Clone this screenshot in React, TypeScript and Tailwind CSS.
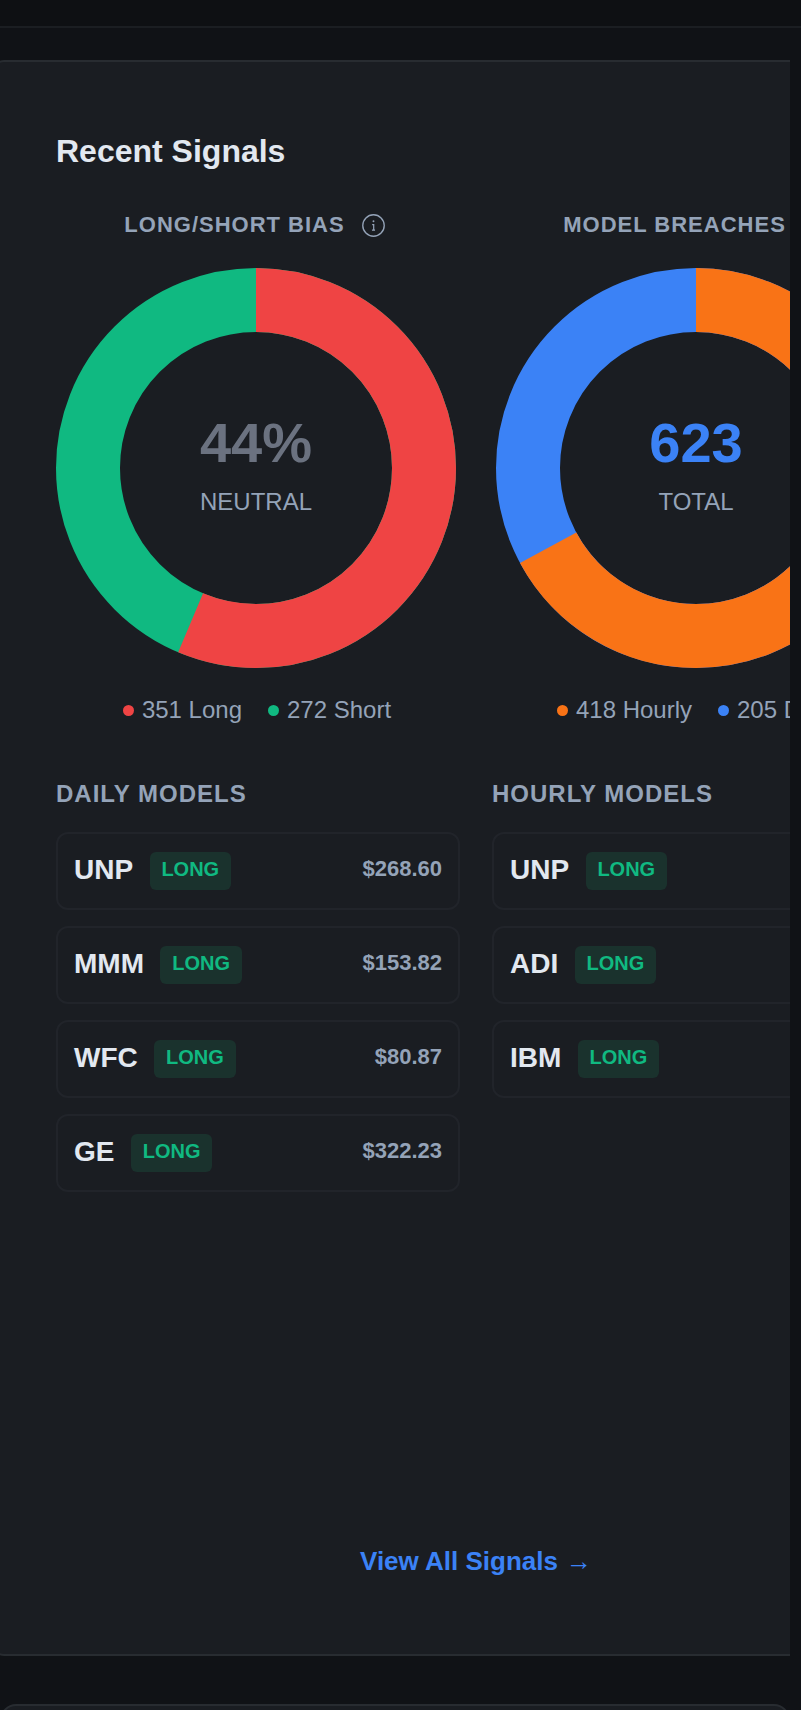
const Donut = ({ a, b, pct }: { a: string; b: string; pct: number }) => {
  const r = 168;
  const c = 2 * Math.PI * r;
  return (
    <svg width="400" height="400" viewBox="0 0 400 400" className="block">
      <circle cx="200" cy="200" r={r} fill="none" stroke={b} strokeWidth="64" />
      <circle
        cx="200"
        cy="200"
        r={r}
        fill="none"
        stroke={a}
        strokeWidth="64"
        strokeDasharray={`${c * pct} ${c}`}
        transform="rotate(-90 200 200)"
      />
    </svg>
  );
};

const Chart = ({
  title,
  a,
  b,
  pct,
  value,
  valueClass,
  label,
  legend,
}: {
  title: string;
  a: string;
  b: string;
  pct: number;
  value: string;
  valueClass: string;
  label: string;
  legend: [string, string][];
}) => (
  <div className="flex w-[400px] flex-col items-center">
    <div className="mr-[3px] flex h-[26px] items-center gap-[17px] text-[22px] font-bold tracking-[1px] whitespace-nowrap text-[#94a3b8]">
      {title}
      <svg width="23" height="23" viewBox="0 0 24 24" fill="none" stroke="#94a3b8" strokeWidth="1.4" className="mt-[2px] shrink-0">
        <circle cx="12" cy="12" r="11.2" />
        <circle cx="12" cy="7.6" r="1" fill="#94a3b8" stroke="none" />
        <path d="M10.6 11h1.6v5.6M10.4 16.8h3.2" strokeWidth="1.3" />
      </svg>
    </div>
    <div className="relative mt-[31px]">
      <Donut a={a} b={b} pct={pct} />
      <div className="absolute inset-0 flex flex-col items-center justify-center pb-[7px]">
        <div className={`text-[56px] leading-[64px] font-bold ${valueClass}`}>{value}</div>
        <div className="mt-[11px] text-2xl leading-[32px] text-[#94a3b8]">{label}</div>
      </div>
    </div>
    <div className="mt-[25px] ml-[2px] flex h-[34px] items-center gap-[26px] text-2xl whitespace-nowrap text-[#94a3b8]">
      {legend.map(([color, text]) => (
        <div key={text} className="flex items-center gap-2">
          <span className="h-[11px] w-[11px] rounded-full" style={{ backgroundColor: color }} />
          {text}
        </div>
      ))}
    </div>
  </div>
);

const Row = ({ ticker, price }: { ticker: string; price?: string }) => (
  <div className="flex h-[78px] items-center justify-between rounded-xl border-2 border-[#21242a] px-4">
    <div className="flex items-center gap-4">
      <span className="mb-[2px] text-[28px] font-bold text-[#e2e8f0]">{ticker}</span>
      <span className="ml-[0.5px] flex h-[38px] items-center justify-center rounded-md bg-[#1a322d] px-[11.75px] pb-[4px] text-xl font-bold text-[#10b981]">
        LONG
      </span>
    </div>
    {price && <span className="mb-[6px] text-[22px] font-bold text-[#94a3b8]">{price}</span>}
  </div>
);

const Models = ({ title, rows }: { title: string; rows: { t: string; p?: string }[] }) => (
  <div className="w-[404px]">
    <div className="text-2xl leading-[28px] font-bold tracking-[1px] whitespace-nowrap text-[#94a3b8]">{title}</div>
    <div className="mt-[24px] flex flex-col gap-4">
      {rows.map((r) => (
        <Row key={r.t} ticker={r.t} price={r.p} />
      ))}
    </div>
  </div>
);

export default function App() {
  return (
    <div className="h-[1710px] w-[801px] overflow-hidden bg-[#101216] font-['Liberation_Sans',Arial,sans-serif]">
      <div className="h-[28px] border-b-2 border-[#1b1e22] bg-[#0e1013]" />
      <div className="h-[1682px] w-[790px] overflow-hidden pt-8">
        <div className="-ml-2 flex h-[1596px] w-[920px] flex-col rounded-xl border-2 border-[#282c31] bg-[#1a1d22] pt-[69px] pb-[73px] pl-[62px]">
          <h2 className="text-[32px] leading-[40px] font-bold text-[#e2e8f0]">Recent Signals</h2>
          <div className="mt-[40px] flex w-[840px] gap-10">
            <Chart
              title="LONG/SHORT BIAS"
              a="#ef4444"
              b="#10b981"
              pct={351 / 623}
              value="44%"
              valueClass="text-[#6b7280]"
              label="NEUTRAL"
              legend={[
                ["#ef4444", "351 Long"],
                ["#10b981", "272 Short"],
              ]}
            />
            <Chart
              title="MODEL BREACHES"
              a="#f97316"
              b="#3b82f6"
              pct={418 / 623}
              value="623"
              valueClass="text-[#3b82f6]"
              label="TOTAL"
              legend={[
                ["#f97316", "418 Hourly"],
                ["#3b82f6", "205 Daily"],
              ]}
            />
          </div>
          <div className="mt-[53px] flex w-[840px] gap-8">
            <Models
              title="DAILY MODELS"
              rows={[
                { t: "UNP", p: "$268.60" },
                { t: "MMM", p: "$153.82" },
                { t: "WFC", p: "$80.87" },
                { t: "GE", p: "$322.23" },
              ]}
            />
            <Models title="HOURLY MODELS" rows={[{ t: "UNP" }, { t: "ADI" }, { t: "IBM" }]} />
          </div>
          <div className="mt-auto flex w-[840px] items-center justify-center gap-2 text-[26px] font-bold text-[#3b82f6]">
            View All Signals <span className="font-normal">→</span>
          </div>
        </div>
        <div className="mt-[48px] h-[40px] w-[790px] rounded-t-2xl border-2 border-[#282c31] bg-[#1a1d22]" />
      </div>
    </div>
  );
}
